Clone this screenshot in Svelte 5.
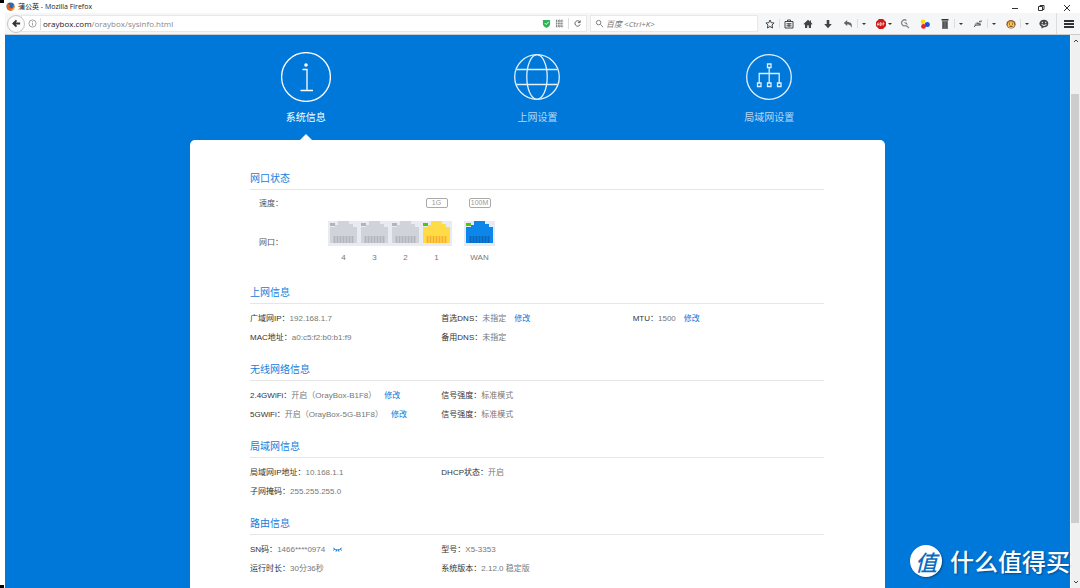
<script>
    const tabs = [
        {id: 'info', label: '系统信息'},
        {id: 'globe', label: '上网设置'},
        {id: 'lan', label: '局域网设置'},
    ]

    const ports = [
        {name: '4', state: 'off'},
        {name: '3', state: 'off'},
        {name: '2', state: 'off'},
        {name: '1', state: 'lan', speed: '1G'},
        {name: 'WAN', state: 'wan', speed: '100M'},
    ]

    // every row holds up to three cells
    const sections = [
        {
            title: '上网信息',
            rows: [
                [
                    {label: '广域网IP', value: '192.168.1.7'},
                    {label: '首选DNS', value: '未指定', edit: true},
                    {label: 'MTU', value: '1500', edit: true},
                ],
                [
                    {label: 'MAC地址', value: 'a0:c5:f2:b0:b1:f9'},
                    {label: '备用DNS', value: '未指定'},
                ],
            ],
        },
        {
            title: '无线网络信息',
            rows: [
                [
                    {label: '2.4GWiFi', value: '开启（OrayBox-B1F8）', edit: true},
                    {label: '信号强度', value: '标准模式'},
                ],
                [
                    {label: '5GWiFi', value: '开启（OrayBox-5G-B1F8）', edit: true},
                    {label: '信号强度', value: '标准模式'},
                ],
            ],
        },
        {
            title: '局域网信息',
            rows: [
                [
                    {label: '局域网IP地址', value: '10.168.1.1'},
                    {label: 'DHCP状态', value: '开启'},
                ],
                [
                    {label: '子网掩码', value: '255.255.255.0'},
                ],
            ],
        },
        {
            title: '路由信息',
            rows: [
                [
                    {label: 'SN码', value: '1466****0974', secret: true},
                    {label: '型号', value: 'X5-3353'},
                ],
                [
                    {label: '运行时长', value: '30分36秒'},
                    {label: '系统版本', value: '2.12.0 稳定版'},
                ],
            ],
        },
    ]

    const tools = [
        {icons: ['star', 'clipboard']},
        {icons: ['home']},
        {icons: ['download']},
        {icons: ['undo'], menu: true},
        {icons: ['abp'], menu: true, tight: true},
        {icons: ['lens']},
        {icons: ['dots']},
        {icons: ['trash'], menu: true},
        {icons: ['bug'], menu: true},
        {icons: ['monkey'], menu: true},
        {icons: ['smiley']},
    ]

    let active = $state('info')
</script>

<div class="window">
    <span class="corner top"></span>
    <span class="corner bottom"></span>

    <header class="titlebar">
        <svg class="fox" viewBox="0 0 16 16">
            <circle cx="8" cy="8" r="7" fill="#2c66b0" />
            <path d="M2 3C0 7 1 13 6 15s9-2 9-7c0-3-1-4-2-5 1 4 0 7-3 8-3 0-5-2-4-4l2-1C6 4 4 5 2 3z" fill="#e8641b" />
            <path d="M14 5c1 5-2 9-6 9 4 2 8-1 7-7z" fill="#fbb829" />
        </svg>
        <span class="title">蒲公英 - Mozilla Firefox</span>
        <div class="controls">
            <button aria-label="最小化"><svg viewBox="0 0 8 8"><path d="M1 4.500h6" /></svg></button>
            <button aria-label="还原"><svg viewBox="0 0 8 8"><path d="M1.500 2.500h4v4h-4zM3 2.500v-1h4v4H5.500" /></svg></button>
            <button aria-label="关闭"><svg viewBox="0 0 8 8"><path d="M1 1l6 6M7 1L1 7" /></svg></button>
        </div>
    </header>

    <div class="toolbar">
        <button class="back" aria-label="后退">
            <svg viewBox="0 0 10 10"><path d="M9 5H2M5 1.500L1.500 5 5 8.500" /></svg>
        </button>
        <div class="address">
            <svg class="site" viewBox="0 0 10 10">
                <circle cx="5" cy="5" r="4" /><path d="M5 4.300v3M5 2.500v1" />
            </svg>
            <a class="url" href="#sysinfo"><b>oraybox.com</b>/oraybox/sysinfo.html</a>
            <svg class="shield" viewBox="0 0 10 10">
                <path d="M1 1h8v4.500Q9 8 5 10 1 8 1 5.500z" fill="#2fb457" />
                <path d="M3 4.500l1.700 1.700L7.500 3" fill="none" stroke="#fff" />
            </svg>
            <svg class="qr" viewBox="0 0 10 10">
                <path d="M1 2h8M1 5h8M1 8h8" stroke="#777" stroke-width="2" stroke-dasharray="1.500 1" fill="none" />
                <path d="M2 .5v9M5 .5v9M8 .5v9" stroke="#8d97a3" stroke-dasharray="1 1" fill="none" />
            </svg>
            <button class="reload" aria-label="重新载入">
                <svg viewBox="0 0 10 10"><path d="M7.600 3.200A3 3 0 1 0 8 6M8 1.500V4H5.500" /></svg>
            </button>
        </div>
        <div class="search">
            <svg viewBox="0 0 10 10"><circle cx="4" cy="4" r="2.500" /><path d="M6 6l3 3" /></svg>
            <input type="text" aria-label="搜索" placeholder="百度 <Ctrl+K>" />
        </div>
        <div class="tools">
            {#each tools as tool}
                <div class="tool" class:tight={tool.tight}>
                    {#each tool.icons as icon}
                        <button class="icon {icon}" aria-label={icon}>
                            <svg viewBox="0 0 10 10">
                                {#if icon === 'star'}
                                    <path d="M5 1l1.200 2.700 2.900.3L7 6l.6 3L5 7.500 2.400 9 3 6 .9 4l2.900-.3z" fill="none" stroke="#444" />
                                {:else if icon === 'clipboard'}
                                    <path d="M1 2.500h8v6.500H1zM3.500 2.500V1h3v1.500M2.500 4.800h5M2.500 6.800h5" fill="none" stroke="#444" />
                                    <path d="M4.500 4h1v4h-1z" fill="#444" />
                                {:else if icon === 'home'}
                                    <path d="M5 .7L.5 5l.8.7.7-.6V9h2.200V6.500h1.600V9H8V5.100l.7.6.8-.7L8 3.500V1.500H7v1z" fill="#444" />
                                {:else if icon === 'download'}
                                    <path d="M3.700 1h2.600v4h2.500L5 9.200 1.200 5h2.500z" fill="#444" />
                                {:else if icon === 'undo'}
                                    <path d="M.8 4l3.400-3v2C8 3 9.600 5 8.500 9 8 6.500 6.500 5.300 4.200 5.300V7z" fill="#5a646e" />
                                {:else if icon === 'abp'}
                                    <path d="M3 0h4l3 3v4l-3 3H3L0 7V3z" fill="#d01a1a" />
                                    <path d="M1.500 6.500v-2q.8-1.500 1.500 0v2M1.500 5.500H3M4.300 3.700v2.800h.8q1-.7 0-1.400 1-.7 0-1.400zM7 6.500V3.700q2.500.8 0 1.600" fill="none" stroke="#fff" stroke-width=".7" />
                                {:else if icon === 'lens'}
                                    <path d="M6.500 1.500A3 3 0 1 0 6 6.500M5.500 6l3.500 3" fill="none" stroke="#888" stroke-width="1.300" />
                                    <path d="M3.500 3.500h3L8 6z" fill="#777" />
                                {:else if icon === 'dots'}
                                    <circle cx="3" cy="2.800" r="2.400" fill="#f9dc12" />
                                    <circle cx="3.500" cy="7.400" r="2.400" fill="#ee2222" />
                                    <circle cx="7.300" cy="5.500" r="2.500" fill="#1f4fe0" />
                                {:else if icon === 'trash'}
                                    <path d="M1.500 0h7v1.500h-7z" fill="#333" />
                                    <path d="M2 1.500h6V10H2z" fill="#777" />
                                    <path d="M3.500 3v6M5 3v6M6.500 3v6" stroke="#444" stroke-width=".7" />
                                {:else if icon === 'bug'}
                                    <path d="M1 6.500l2-3h5L7 7H3z" fill="#999" />
                                    <path d="M1 8l2-2M4 4l4 2M6 2.500L9 2" stroke="#555" fill="none" />
                                {:else if icon === 'monkey'}
                                    <ellipse cx="5" cy="5.300" rx="4.600" ry="4.200" fill="#8a5a24" />
                                    <ellipse cx="5" cy="6" rx="3.400" ry="2.900" fill="#f3c26b" />
                                    <path d="M2 3.500q3-2 6 0" stroke="#e0a12c" fill="none" />
                                    <path d="M3.500 4.500v1M6.500 4.500v1M3.500 7.300h3" stroke="#5b2d0c" stroke-width=".9" />
                                {:else}
                                    <path d="M5 .8c6 0 5.500 7.500 0 7.500L2.500 9.500V7.800C-1 6 0 .8 5 .8z" fill="#444" />
                                    <path d="M3.300 2.800v1.400M6.700 2.800v1.400M2.600 5.500q2.400 2 4.800 0" stroke="#fff" fill="none" />
                                {/if}
                            </svg>
                        </button>
                    {/each}
                    {#if tool.menu}
                        <button class="caret" aria-label="更多"><i></i></button>
                    {/if}
                </div>
            {/each}
        </div>
        <button class="menu" aria-label="打开菜单">
            <svg viewBox="0 0 10 10"><path d="M0 2h10M0 5h10M0 8h10" /></svg>
        </button>
    </div>

    <div class="viewport">
        <main>
            <nav>
                {#each tabs as tab}
                    <button class="tab" class:active={active === tab.id} onclick={() => active = tab.id}>
                        <span class="glyph">
                            {#if tab.id === 'info'}
                                <svg class="large" viewBox="0 0 50 50">
                                    <circle cx="25" cy="25" r="24.400" />
                                    <circle cx="25" cy="13" r="1.800" class="solid" />
                                    <path d="M21.500 17.500h4.500v21M19.500 38.500h12.500" />
                                </svg>
                            {:else if tab.id === 'globe'}
                                <svg viewBox="0 0 46 46">
                                    <circle cx="23" cy="23" r="22.300" />
                                    <ellipse cx="23" cy="23" rx="10.200" ry="22.300" />
                                    <path d="M2.500 15.500h41M2.500 30.500h41" />
                                </svg>
                            {:else}
                                <svg viewBox="0 0 46 46">
                                    <circle cx="23" cy="23" r="22.300" />
                                    <path d="M21.500 10h3.500v3.500h-3.500zM11.500 29h3.500v3.500h-3.500zM21.500 29h3.500v3.500h-3.500zM31.500 29h3.500v3.500h-3.500zM23.200 13.500V29M13.200 29V19.500h20V29" />
                                </svg>
                            {/if}
                        </span>
                        <span>{tab.label}</span>
                    </button>
                {/each}
            </nav>

            <div class="card">
                <section>
                    <h2>网口状态</h2>
                    <div class="ports">
                        <div class="names">
                            <span>速度：</span>
                            <span>网口：</span>
                        </div>
                        {#each ports as port}
                            <div class="port {port.state}">
                                <span class="slot">
                                    {#if port.speed}<span class="speed">{port.speed}</span>{/if}
                                </span>
                                <svg viewBox="0 0 31 25">
                                    <path class="frame" d="M0 0h31v25H0z" />
                                    <path class="led" d="M2 2h5v3H2z" />
                                    <path class="jack" d="M10 0h11v3h4v3h4v16H2V6h5V4h3z" />
                                    <path class="pins" d="M5 15h21v7H5z" />
                                    <path class="lines" d="M6.500 15v7M9.500 15v7M12.500 15v7M15.500 15v7M18.500 15v7M21.500 15v7M24.500 15v7" />
                                </svg>
                                <span>{port.name}</span>
                            </div>
                        {/each}
                    </div>
                </section>

                {#each sections as section}
                    <section>
                        <h2>{section.title}</h2>
                        <div class="rows">
                            {#each section.rows as row}
                                <div class="row">
                                    {#each row as cell}
                                        <div class="cell">
                                            <span class="label">{cell.label}：</span>
                                            <span>{cell.value}</span>
                                            {#if cell.edit}
                                                <a href="#edit">修改</a>
                                            {/if}
                                            {#if cell.secret}
                                                <button class="eye" aria-label="显示">
                                                    <svg viewBox="0 0 9 6"><path d="M.3 1q4.200 4 8.400 0M1.500 2L.5 3.500M7.500 2l1 1.500M3.500 3L3 4.700M5.500 3L6 4.700" /></svg>
                                                </button>
                                            {/if}
                                        </div>
                                    {/each}
                                </div>
                            {/each}
                        </div>
                    </section>
                {/each}
            </div>
        </main>

        <div class="scrollbar">
            <button aria-label="向上滚动"><svg viewBox="0 0 6 6"><path d="M1 4l2-2 2 2" /></svg></button>
            <div class="before"></div>
            <div class="thumb"></div>
            <div class="after"></div>
            <button aria-label="向下滚动"><svg viewBox="0 0 6 6"><path d="M1 2l2 2 2-2" /></svg></button>
        </div>
    </div>

    <div class="watermark">
        <span class="seal">值</span>
        <span>什么值得买</span>
    </div>
</div>

<style>
    :global(body) {
        margin: 0;
    }

    .window {
        position: relative;
        display: flex;
        flex-direction: column;
        height: 100vh;
        overflow: hidden;
        box-sizing: border-box;
        padding-left: 5px;
        background: #fff;
        color: #777;
        font: 8px/12px "Liberation Sans", "Noto Sans CJK SC", sans-serif;
    }

    button {
        display: flex;
        align-items: center;
        justify-content: center;
        padding: 0;
        border: none;
        background: none;
        color: inherit;
        font: inherit;
    }

    svg {
        display: block;
        flex-shrink: 0;
    }

    .corner {
        position: absolute;
        left: 0;
        width: 4px;
        height: 3px;
        background: #000;
    }

    .corner.top {
        top: 0;
    }

    .corner.bottom {
        bottom: 0;
    }

    /* browser chrome */
    .titlebar {
        display: flex;
        align-items: center;
        height: 13px;
        flex-shrink: 0;
        color: #222;
        font-family: "Open Sans", "Noto Sans CJK SC", sans-serif;
        font-size: 7px;
    }

    .fox {
        width: 9px;
        height: 9px;
        margin: 0 3px 0 1px;
    }

    .controls {
        display: flex;
        margin-left: auto;
        padding-top: 3px;
    }

    .controls button {
        width: 26px;
    }

    .controls svg {
        width: 8px;
        height: 8px;
        fill: none;
        stroke: #333;
        stroke-width: 1;
    }

    .toolbar {
        display: flex;
        align-items: center;
        flex-shrink: 0;
        height: 21px;
        border-bottom: 1px solid #ccc;
        background: #f5f6f7;
        font-family: "Open Sans", "Noto Sans CJK SC", sans-serif;
    }

    .back {
        z-index: 1;
        flex-shrink: 0;
        box-sizing: border-box;
        width: 18px;
        height: 18px;
        margin: 0 -4px 0 2px;
        border: 1px solid #c4c4c4;
        border-radius: 50%;
        background: #fcfcfc;
    }

    .back svg {
        width: 9px;
        height: 9px;
        fill: none;
        stroke: #333;
        stroke-width: 2;
    }

    .address,
    .search {
        display: flex;
        align-items: center;
        box-sizing: border-box;
        height: 17px;
        border: 1px solid #e8e8e8;
        background: #fff;
    }

    .address {
        flex: 1;
        min-width: 0;
        padding-left: 6px;
    }

    .site {
        width: 9px;
        height: 9px;
        margin-right: 3px;
        fill: none;
        stroke: #999;
        stroke-width: 1;
    }

    .url {
        flex: 1;
        padding-left: 2px;
        border-left: 1px solid #ddd;
        color: #888;
        text-decoration: none;
        white-space: nowrap;
    }

    .url b {
        color: #222;
        font-weight: normal;
    }

    .shield,
    .qr {
        width: 9px;
        height: 9px;
        margin-right: 4px;
    }

    .reload {
        width: 18px;
        height: 11px;
        border-left: 1px solid #ddd;
    }

    .reload svg {
        width: 9px;
        height: 9px;
        fill: none;
        stroke: #555;
        stroke-width: 1;
    }

    .search {
        width: 168px;
        margin: 0 3px;
        padding-left: 4px;
    }

    .search svg {
        width: 9px;
        height: 9px;
        fill: none;
        stroke: #777;
        stroke-width: 1;
    }

    .search input {
        flex: 1;
        min-width: 0;
        padding: 0 2px;
        border: none;
        outline: none;
        background: none;
        font: inherit;
    }

    .search input::placeholder {
        color: #777;
        font-style: italic;
    }

    .tools {
        display: flex;
        gap: 2px;
    }

    .tool {
        display: flex;
        align-items: center;
    }

    .icon {
        width: 18px;
        height: 12px;
    }

    .icon svg {
        width: 10px;
        height: 10px;
    }

    .icon + .icon,
    .caret {
        height: 9px;
        border-left: 1px solid #ddd;
    }

    .caret {
        width: 13px;
    }

    .caret i {
        border: 2px solid transparent;
        border-top-color: #333;
        border-bottom-width: 0;
    }

    .tight .caret {
        width: 8px;
        margin-left: -4px;
        border: none;
    }

    .menu {
        width: 24px;
        height: 100%;
        margin-left: 3px;
        border-left: 1px solid #ddd;
    }

    .menu svg {
        width: 10px;
        height: 10px;
        stroke: #333;
        stroke-width: 2;
    }

    /* router page */
    .viewport {
        display: flex;
        flex: 1;
        min-height: 0;
    }

    main {
        flex: 1;
        overflow: hidden;
        background: #0078d9;
    }

    nav {
        display: grid;
        grid-template-columns: repeat(3, 1fr);
        max-width: 695px;
        height: 105px;
        margin: 0 auto;
    }

    .tab {
        position: relative;
        flex-direction: column;
        justify-content: flex-start;
        padding-top: 17px;
        color: #b5d7f5;
        font-size: 10px;
        line-height: 16px;
    }

    .tab.active {
        color: #fff;
    }

    .tab.active::after {
        content: "";
        position: absolute;
        bottom: 0;
        border: 6px solid transparent;
        border-top-width: 0;
        border-bottom-color: #fff;
    }

    .glyph {
        display: flex;
        align-items: center;
        height: 50px;
        margin-bottom: 8px;
    }

    .glyph svg {
        width: 46px;
        height: 46px;
        fill: none;
        stroke: #e2f0fc;
        stroke-width: 1.3;
    }

    .glyph .large {
        width: 50px;
        height: 50px;
        stroke: #fff;
    }

    .glyph .solid {
        fill: #fff;
        stroke: none;
    }

    .card {
        box-sizing: border-box;
        max-width: 695px;
        min-height: 100%;
        margin: 0 auto;
        padding: 29px 61px 0 60px;
        border-radius: 5px 5px 0 0;
        background: #fff;
    }

    section {
        margin-bottom: 13px;
    }

    h2 {
        margin: 0;
        border-bottom: 1px solid #e6e6e6;
        color: #1580dc;
        font-size: 10px;
        font-weight: normal;
        line-height: 20px;
    }

    .ports {
        display: flex;
        padding: 8px 0 6px 9px;
    }

    .names {
        display: flex;
        flex-direction: column;
        gap: 27px;
        width: 69px;
        color: #555;
    }

    .port {
        display: flex;
        flex-direction: column;
        align-items: center;
    }

    .port.wan {
        margin-left: 12px;
    }

    .slot {
        height: 23px;
    }

    .speed {
        display: block;
        box-sizing: border-box;
        width: 22px;
        border: 1px solid #aaa;
        border-radius: 2px;
        color: #999;
        font-size: 7px;
        line-height: 8px;
        text-align: center;
    }

    .port svg {
        width: 31px;
        height: 25px;
        margin-bottom: 6px;
    }

    .frame {
        fill: #e8ebf3;
    }

    .led {
        fill: #b2b5ba;
    }

    .jack {
        fill: #d0d3da;
    }

    .pins {
        fill: #c3c6cd;
    }

    .lines {
        fill: none;
        stroke: #b2b5bb;
    }

    .lan .led,
    .wan .led {
        fill: #4fc80a;
    }

    .lan .jack {
        fill: #ffdc46;
    }

    .lan .pins {
        fill: #ffc93c;
    }

    .lan .lines {
        stroke: #f5ae35;
    }

    .wan .jack {
        fill: #0d86ea;
    }

    .wan .pins {
        fill: #0c78d6;
    }

    .wan .lines {
        stroke: #0a66bc;
    }

    .rows {
        padding-top: 5px;
    }

    .row {
        display: grid;
        grid-template-columns: repeat(3, 1fr);
        line-height: 19px;
    }

    .cell {
        display: flex;
        align-items: center;
        white-space: nowrap;
    }

    .label {
        color: #333;
    }

    .cell a {
        margin-left: 8px;
        color: #0a78dc;
        text-decoration: none;
    }

    .eye {
        margin-left: 8px;
    }

    .eye svg {
        width: 9px;
        height: 6px;
        fill: none;
        stroke: #0a78dc;
        stroke-width: 1;
    }

    .scrollbar {
        display: flex;
        flex-direction: column;
        width: 9px;
        border-left: 1px solid #fff;
        background: #f0f0f0;
    }

    .scrollbar button {
        height: 12px;
    }

    .scrollbar svg {
        width: 6px;
        height: 6px;
        fill: none;
        stroke: #444;
        stroke-width: 1;
    }

    .before {
        flex: 47;
    }

    .thumb {
        flex: 430;
        margin-right: 1px;
        background: #cdcdcd;
    }

    .after {
        flex: 53;
    }

    .watermark {
        position: absolute;
        right: 10px;
        bottom: 11px;
        display: flex;
        align-items: center;
        gap: 8px;
        color: #fff;
        font-family: "Noto Sans CJK SC", sans-serif;
        font-size: 24px;
        font-weight: 500;
        line-height: 32px;
        text-shadow: 1px 1px 2px #024a8c;
    }

    .seal {
        width: 32px;
        height: 32px;
        border-radius: 50%;
        background: #fff;
        box-shadow: 1px 1px 2px #024a8c;
        color: #0a6cc0;
        font-size: 22px;
        font-style: italic;
        text-align: center;
        text-shadow: none;
    }
</style>
